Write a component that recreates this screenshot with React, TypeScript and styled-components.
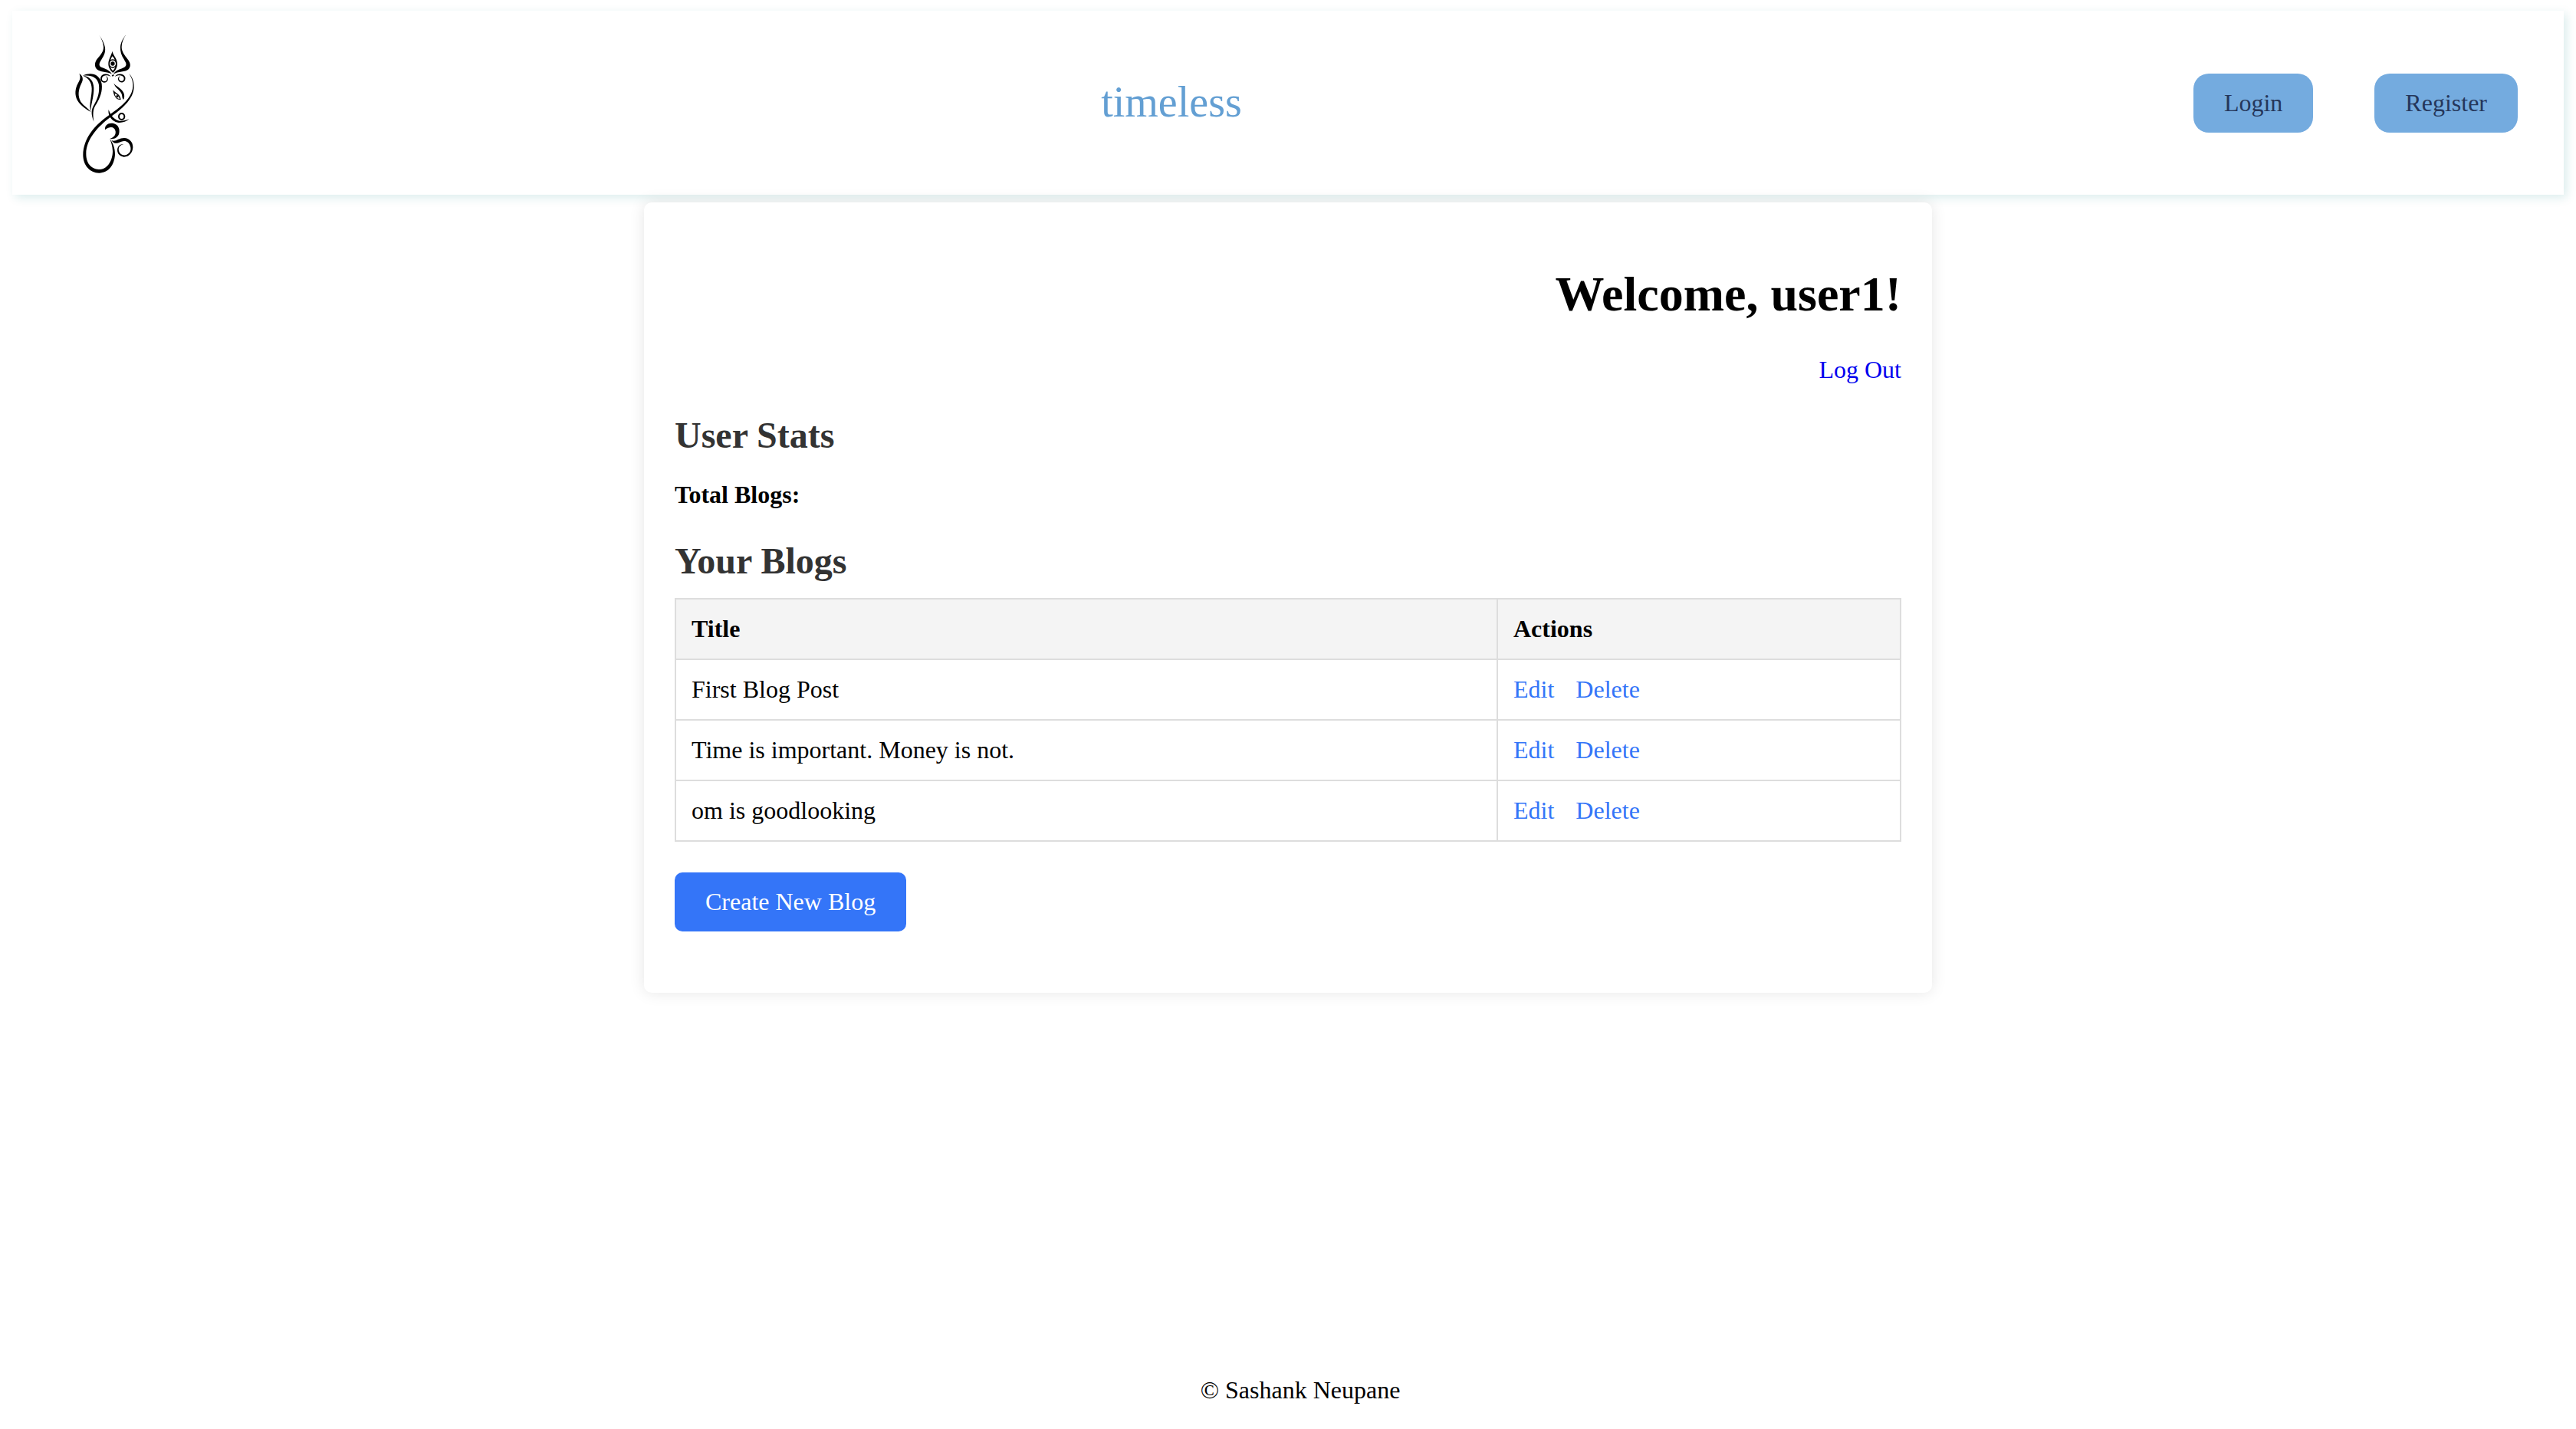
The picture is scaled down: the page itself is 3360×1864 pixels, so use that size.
import React from "react";
import styled, { createGlobalStyle } from "styled-components";

const GlobalStyle = createGlobalStyle`
  * { box-sizing: border-box; }
  body {
    margin: 0;
    background: #fff;
    color: #000;
    font-family: "Liberation Serif", "Times New Roman", serif;
    font-size: 32px;
    line-height: 37px;
  }
  a { text-decoration: none; }
`;

const Page = styled.div`
  display: flex;
  flex-direction: column;
  height: 1864px;
  padding: 14px 16px 0;
`;

const Header = styled.header`
  display: flex;
  align-items: center;
  justify-content: space-between;
  height: 240px;
  padding: 0 60px 0 64px;
  box-shadow: 4px 4px 12px rgba(0, 128, 128, 0.14);
`;

const Logo = styled.svg`
  width: 120px;
  height: 210px;
  margin-top: 2px;
`;

const Brand = styled.a`
  margin-right: 5px;
  padding-bottom: 2px;
  color: #639fd3;
  font-size: 56px;
  line-height: 64px;
`;

const Nav = styled.nav`
  display: flex;
  gap: 80px;
`;

const NavButton = styled.a`
  padding: 20px 40px;
  border-radius: 20px;
  background: #74abdf;
  color: #25365a;
`;

const Card = styled.main`
  width: 1680px;
  height: 1031px;
  margin: 10px auto 0;
  padding: 40px;
  border-radius: 10px;
  background: #fff;
  box-shadow: 0 0 20px rgba(0, 0, 0, 0.1);
`;

const Welcome = styled.section`
  display: flex;
  flex-direction: column;
  align-items: flex-end;
`;

const Title = styled.h1`
  margin: 43px 0;
  font-size: 64px;
  line-height: 74px;
`;

const LogOut = styled.a`
  color: #0000ee;
`;

const Heading = styled.h2`
  margin: 39px 0 21px;
  color: #333;
  font-size: 48px;
  line-height: 55px;
`;

const Stat = styled.p`
  margin: 32px 0 40px;
  font-weight: bold;
`;

const Table = styled.table`
  width: 100%;
  border-collapse: collapse;
  table-layout: fixed;
`;

const Cell = styled.td<{ $width?: number }>`
  width: ${(p) => (p.$width ? `${p.$width}px` : "auto")};
  height: 79px;
  padding: 20px;
  border: 2px solid #ddd;
  text-align: left;
`;

const HeadCell = styled(Cell)`
  background: #f4f4f4;
  font-weight: bold;
`;

const Action = styled.a`
  margin-right: 20px;
  color: #3475f8;
`;

const CreateButton = styled.a`
  display: inline-block;
  margin-top: 40px;
  padding: 20px 40px;
  border-radius: 10px;
  background: #3475f8;
  color: #fff;
`;

const Footer = styled.footer`
  margin-top: auto;
  padding: 0 0 32px 32px;
  text-align: center;
`;

const posts = ["First Blog Post", "Time is important. Money is not.", "om is goodlooking"];

function GaneshLogo() {
  return (
    <Logo viewBox="0 0 360 630" fill="#000" aria-label="Logo">
      <path d="M147 46C158 62 168 78 171 96C174 118 164 132 155 146C150 154 147 161 150 168C158 179 184 176 198 200C180 190 152 194 138 180C128 168 131 153 140 141C156 122 166 110 165 92C164 76 156 60 147 46Z" />
      <path d="M253 46C243 61 236 76 236 94C236 112 247 126 259 141C269 154 274 167 264 180C250 194 222 188 204 200C216 178 242 182 252 168C257 160 250 152 245 142C235 127 230 112 231 94C232 76 242 60 253 46Z" />
      <path d="M199 110C204 128 219 140 219 160C219 174 212 187 202 195C192 187 184 174 184 160C184 140 196 129 199 110ZM200 130C197 134 194 139 193 144C198 141 204 141 209 144C207 139 204 134 200 130ZM192 172C194 178 197 183 201 187C206 183 209 178 211 172C205 178 198 178 192 172ZM201 146C193 146 189 152 189 159C189 166 193 172 201 172C209 172 213 166 213 159C213 152 209 146 201 146Z" fillRule="evenodd" />
      <circle cx="201" cy="159" r="8" />
      <path d="M194 210C184 196 160 196 154 212C150 228 164 236 175 232C186 226 185 211 174 208C182 215 180 225 172 228C163 230 156 223 160 213C166 202 182 203 194 210Z" />
      <path d="M209 210C219 196 243 196 250 212C253 228 240 236 229 231C219 225 220 211 230 208C223 215 225 224 232 227C241 229 247 222 244 213C238 202 221 203 209 210Z" />
      <path d="M197 206L203 200L206 206L200 209Z" />
      <path d="M70 198C86 208 87 222 78 238C67 260 63 286 76 308C87 324 105 333 116 348C97 338 75 323 63 303C51 280 54 256 65 236C73 222 77 213 70 198Z" />
      <path d="M84 206C118 190 151 202 158 238C162 268 151 294 137 317C127 332 121 345 127 386C115 354 117 339 128 320C143 294 150 272 147 242C142 212 117 202 84 206Z" />
      <path d="M84 206C112 209 126 226 127 254C128 288 116 315 115 346C107 319 120 286 119 256C118 232 107 215 84 206Z" />
      <path d="M205 236C218 250 238 257 244 274C248 284 247 294 243 300C236 292 240 284 234 274C227 260 213 256 205 236Z" />
      <path d="M202 262C212 277 229 274 233 300C216 302 206 290 202 262ZM209 276C211 288 217 296 228 297C225 284 219 280 209 276Z" fillRule="evenodd" />
      <circle cx="219" cy="287" r="5" />
      <path d="M265 198C287 221 290 257 275 286C256 322 225 344 190 370C144 405 97 455 97 512C97 556 124 573 151 573C184 571 201 534 201 501C200 481 195 468 190 454C203 472 210 490 210 514C208 557 184 587 148 587C111 587 85 556 85 516C86 455 126 406 174 370C213 341 250 318 270 282C286 253 283 225 265 198Z" />
      <path d="M185 339C190 353 199 370 214 378C229 388 247 382 266 376C248 390 225 395 207 384C190 374 182 356 185 339Z" />
      <ellipse cx="236" cy="366" rx="11" ry="12" fill="none" stroke="#000" strokeWidth="6" />
      <path d="M171 418C169 397 187 389 204 393C222 397 230 414 226 432C222 448 207 456 190 453C204 449 214 439 212 424C209 407 192 402 171 418Z" />
      <path d="M196 459C213 467 223 450 246 450C266 450 281 467 280 487C279 509 264 525 244 524C225 522 216 506 220 490C224 477 234 473 244 475C229 477 222 488 225 500C229 514 243 521 256 515C270 509 274 496 270 483C265 464 250 458 235 464C219 471 207 476 196 459Z" />
    </Logo>
  );
}

export default function App() {
  return (
    <>
      <GlobalStyle />
      <Page>
        <Header>
          <GaneshLogo />
          <Brand>timeless</Brand>
          <Nav>
            <NavButton>Login</NavButton>
            <NavButton>Register</NavButton>
          </Nav>
        </Header>
        <Card>
          <Welcome>
            <Title>Welcome, user1!</Title>
            <LogOut>Log Out</LogOut>
          </Welcome>
          <Heading>User Stats</Heading>
          <Stat>Total Blogs:</Stat>
          <Heading>Your Blogs</Heading>
          <Table>
            <thead>
              <tr>
                <HeadCell as="th">Title</HeadCell>
                <HeadCell as="th" $width={526}>Actions</HeadCell>
              </tr>
            </thead>
            <tbody>
              {posts.map((post) => (
                <tr key={post}>
                  <Cell>{post}</Cell>
                  <Cell>
                    <Action>Edit</Action> <Action>Delete</Action>
                  </Cell>
                </tr>
              ))}
            </tbody>
          </Table>
          <CreateButton>Create New Blog</CreateButton>
        </Card>
        <Footer>© Sashank Neupane</Footer>
      </Page>
    </>
  );
}
